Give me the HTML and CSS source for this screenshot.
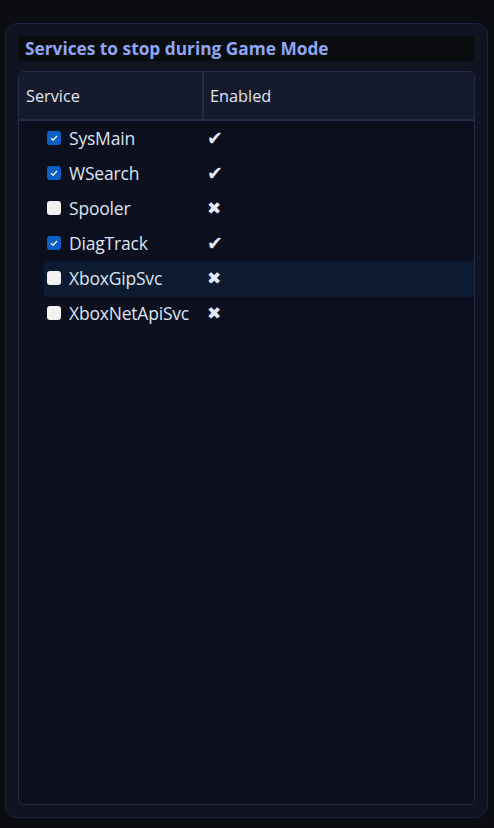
FILE: index.html
```html
<!DOCTYPE html>
<html>
<head>
<meta charset="utf-8">
<link rel="stylesheet" href="styles.css">
</head>
<body>
<div class="card">
  <div class="title">Services to stop during Game Mode</div>
  <div class="table">
    <div class="head">
      <div class="hcell hsvc">Service</div>
      <div class="hcell hen">Enabled</div>
    </div>
    <div class="rows">
      <div class="row"><div class="svc"><span class="cb on"><svg viewBox="0 0 14 14"><path d="M4 7.2 L6.1 9.2 L10 5" /></svg></span><span class="name">SysMain</span></div><div class="en">✔</div></div>
      <div class="row"><div class="svc"><span class="cb on"><svg viewBox="0 0 14 14"><path d="M4 7.2 L6.1 9.2 L10 5" /></svg></span><span class="name">WSearch</span></div><div class="en">✔</div></div>
      <div class="row"><div class="svc"><span class="cb"></span><span class="name">Spooler</span></div><div class="en x">✖</div></div>
      <div class="row"><div class="svc"><span class="cb on"><svg viewBox="0 0 14 14"><path d="M4 7.2 L6.1 9.2 L10 5" /></svg></span><span class="name">DiagTrack</span></div><div class="en">✔</div></div>
      <div class="row sel"><div class="svc"><span class="cb"></span><span class="name">XboxGipSvc</span></div><div class="en x">✖</div></div>
      <div class="row"><div class="svc"><span class="cb"></span><span class="name">XboxNetApiSvc</span></div><div class="en x">✖</div></div>
    </div>
  </div>
</div>
</body>
</html>
```
FILE: styles.css
```css
html, body {
  margin: 0;
  padding: 0;
  background: #0c0d12;
  height: 100%;
}
body {
  font-family: "Open Sans", "Noto Sans", sans-serif;
  padding: 23px 6px 10px 5px;
  box-sizing: border-box;
}
.card {
  box-sizing: border-box;
  width: 483px;
  height: 795px;
  background: #0f1420;
  border: 1px solid #1c2340;
  border-radius: 12px;
  padding: 12px 12px 12px 12px;
  display: flex;
  flex-direction: column;
}
.title {
  height: 25px;
  background: #0b0c10;
  color: #8ea6f6;
  font-weight: 700;
  font-size: 17.3px;
  line-height: 25px;
  padding-left: 7px;
  margin-right: 1px;
}
.table {
  margin-top: 10px;
  flex: 1;
  border: 1px solid #232a4a;
  border-radius: 6px;
  background: #0c0f1e;
  display: flex;
  flex-direction: column;
  overflow: hidden;
}
.head {
  display: flex;
  height: 47px;
  background: #151a2c;
  border-bottom: 2px solid #232a4a;
}
.hcell {
  color: #e2e7f2;
  font-size: 16.3px;
  line-height: 49px;
}
.hsvc {
  width: 176px;
  padding-left: 7px;
  border-right: 2px solid #232a4a;
}
.hen {
  padding-left: 6px;
}
.rows {
  padding-top: 1px;
}
.row {
  display: flex;
  align-items: center;
  height: 35px;
  margin-left: 25px;
}
.row.sel {
  background: #0d1b31;
}
.svc {
  width: 159px;
  display: flex;
  align-items: center;
}
.cb {
  box-sizing: border-box;
  width: 14px;
  height: 14px;
  margin-left: 3px;
  margin-right: 8px;
  border-radius: 3px;
  background: #f2f2f2;
  display: inline-flex;
  margin-top: -3px;
}
.cb.on {
  background: #0a60c2;
}
.cb svg {
  width: 14px;
  height: 14px;
  fill: none;
  stroke: #ffffff;
  stroke-width: 1.3;
}
.name {
  color: #dde3f2;
  font-size: 17.5px;
  letter-spacing: -0.2px;
  margin-top: -3px;
}
.en {
  color: #e6eaff;
  font-size: 19px;
  padding-left: 4px;
  font-family: "DejaVu Sans", sans-serif;
  margin-top: -3px;
}
.en.x {
  font-size: 17px;
}
```
